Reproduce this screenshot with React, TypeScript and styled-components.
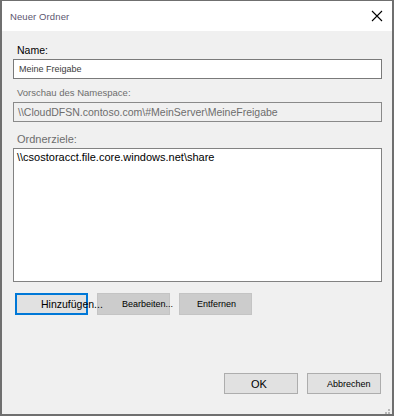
import React from "react";
import styled, { createGlobalStyle } from "styled-components";

const Global = createGlobalStyle`
  html, body { margin: 0; padding: 0; background: #ffffff; }
  body { font-family: "Liberation Sans", Arial, sans-serif; }
`;

const Window = styled.div`
  width: 394px;
  height: 416px;
  box-sizing: border-box;
  border: 2px solid #6f6f6f;
  border-top-width: 1px;
  display: flex;
  flex-direction: column;
  background: #f0f0f0;
  overflow: hidden;
`;

const TitleBar = styled.div`
  height: 30px;
  background: #ffffff;
  display: flex;
  align-items: center;
  justify-content: space-between;
  padding: 0 8px 0 8px;
  flex: none;
`;

const Title = styled.span`
  font-size: 9.5px;
  color: #5c5670;
  letter-spacing: 0.1px;
`;

const CloseBtn = styled.div`
  width: 14px;
  height: 14px;
  display: flex;
  align-items: center;
  justify-content: center;
`;

const Body = styled.div`
  flex: 1;
  display: flex;
  flex-direction: column;
  padding: 12px 10px 0 11px;
  position: relative;
`;

const Label = styled.div<{ $muted?: boolean; $mt: number; $size: number }>`
  font-size: ${(p) => p.$size}px;
  line-height: 14px;
  height: 14px;
  margin-top: ${(p) => p.$mt}px;
  padding-left: 4px;
  color: ${(p) => (p.$muted ? "#6d6d6d" : "#000000")};
`;

const Field = styled.div<{ $readonly?: boolean }>`
  height: 20px;
  box-sizing: border-box;
  border: 1px solid ${(p) => (p.$readonly ? "#8a8a8a" : "#7a7a7a")};
  background: ${(p) => (p.$readonly ? "#f0f0f0" : "#ffffff")};
  color: ${(p) => (p.$readonly ? "#6d6d6d" : "#3c3c3c")};
  font-size: ${(p) => (p.$readonly ? 10.5 : 9)}px;
  display: flex;
  align-items: center;
  padding-left: ${(p) => (p.$readonly ? 4 : 5)}px;
  margin-top: 2px;
  white-space: nowrap;
  overflow: hidden;
`;

const ListBox = styled.div`
  height: 134px;
  box-sizing: border-box;
  border: 1px solid #828282;
  background: #ffffff;
  margin-top: 2px;
  padding: 1px 0 0 3px;
  font-size: 11px;
  line-height: 14px;
  color: #000000;
`;

const ButtonRow = styled.div`
  display: flex;
  gap: 9px;
  margin-top: 11px;
  padding-left: 2px;
`;

const Btn = styled.div<{ $focus?: boolean; $dark?: boolean; $w: number; $pl: number; $h?: number }>`
  width: ${(p) => p.$w}px;
  height: ${(p) => p.$h ?? 22}px;
  box-sizing: border-box;
  border: ${(p) => (p.$focus ? "2px solid #0078d7" : "1px solid " + (p.$dark ? "#c4c4c4" : "#adadad"))};
  background: ${(p) => (p.$dark ? "#cccccc" : "#e1e1e1")};
  color: #000000;
  display: flex;
  align-items: center;
  padding-left: ${(p) => p.$pl}px;
  white-space: nowrap;
  overflow: visible;
  flex: none;
`;

const BtnText = styled.span<{ $size: number }>`
  position: relative;
  z-index: 1;
  font-size: ${(p) => p.$size}px;
`;

const Footer = styled.div`
  margin-top: auto;
  margin-bottom: 20px;
  display: flex;
  justify-content: flex-end;
  gap: 9px;
  padding-right: 1px;
`;

const Grip = styled.div`
  position: absolute;
  right: 2px;
  bottom: 2px;
  width: 9px;
  height: 9px;
`;

export default function App() {
  return (
    <>
      <Global />
      <Window>
        <TitleBar>
          <Title>Neuer Ordner</Title>
          <CloseBtn>
            <svg width="12" height="12" viewBox="0 0 12 12">
              <path d="M1 1 L11 11 M11 1 L1 11" stroke="#000" strokeWidth="1.1" fill="none" />
            </svg>
          </CloseBtn>
        </TitleBar>
        <Body>
          <Label $mt={0} $size={10.5}>Name:</Label>
          <Field>Meine Freigabe</Field>
          <Label $muted $mt={7} $size={9.5}>Vorschau des Namespace:</Label>
          <Field $readonly>\\CloudDFSN.contoso.com\#MeinServer\MeineFreigabe</Field>
          <Label $muted $mt={10} $size={11}>Ordnerziele:</Label>
          <ListBox>\\csostoracct.file.core.windows.net\share</ListBox>
          <ButtonRow>
            <Btn $focus $w={73} $pl={24}><BtnText $size={10.5}>Hinzufügen...</BtnText></Btn>
            <Btn $dark $w={73} $pl={24}><BtnText $size={9}>Bearbeiten...</BtnText></Btn>
            <Btn $dark $w={73} $pl={17}><BtnText $size={9}>Entfernen</BtnText></Btn>
          </ButtonRow>
          <Footer>
            <Btn $w={74} $pl={26} $h={21}><BtnText $size={11}>OK</BtnText></Btn>
            <Btn $w={74} $pl={19} $h={21}><BtnText $size={9}>Abbrechen</BtnText></Btn>
          </Footer>
          <Grip>
            <svg width="9" height="9" viewBox="0 0 9 9">
              <rect x="7" y="1" width="2" height="2" fill="#b8b8b8" />
              <rect x="4" y="4" width="2" height="2" fill="#b8b8b8" />
              <rect x="7" y="4" width="2" height="2" fill="#b8b8b8" />
              <rect x="1" y="7" width="2" height="2" fill="#b8b8b8" />
              <rect x="4" y="7" width="2" height="2" fill="#b8b8b8" />
              <rect x="7" y="7" width="2" height="2" fill="#b8b8b8" />
            </svg>
          </Grip>
        </Body>
      </Window>
    </>
  );
}
